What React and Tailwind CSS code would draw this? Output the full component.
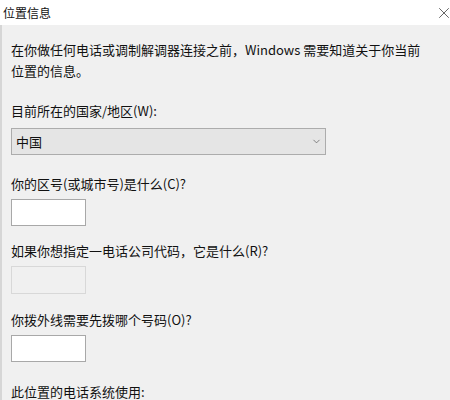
import { ChevronDown, X } from 'lucide-react';

const font = { fontFamily: '"Microsoft YaHei", "Noto Sans CJK SC", "Noto Sans", sans-serif' };

function Label({ children, className = '' }) {
  return <div className={`h-[21px] leading-[21px] text-[13px] text-[#111] ${className}`}>{children}</div>;
}

function TextBox({ disabled = false, className = '' }) {
  return (
    <div
      className={`w-[75px] h-[27px] border ${
        disabled ? 'bg-[#f0f0f0] border-[#d8d8d8]' : 'bg-white border-[#a8a8a8]'
      } ${className}`}
    />
  );
}

export default function App() {
  return (
    <div className="w-[450px] h-[400px] overflow-hidden bg-[#f0f0f0]" style={font}>
      {/* title bar */}
      <div className="h-[25px] bg-white flex items-center justify-between pl-[3px] pr-0">
        <span className="text-[12px] text-[#111]">位置信息</span>
        <X className="w-[18px] h-[18px] text-[#333] mr-[-3px]" strokeWidth={1} />
      </div>

      <div className="border-l-2 border-[#d6d6d6] pl-[9px] h-[375px]">
        <p className="pt-[14px] text-[13px] leading-[21px] text-[#111] w-[420px]">
          在你做任何电话或调制解调器连接之前，Windows 需要知道关于你当前位置的信息。
        </p>

        <Label className="mt-[19px]">目前所在的国家/地区(W):</Label>
        <div className="mt-[7px] w-[315px] h-[27px] bg-[#e5e5e5] border border-[#acacac] flex items-center justify-between pl-[4px] pr-[3px]">
          <span className="text-[13px] text-[#111]">中国</span>
          <ChevronDown className="w-[11px] h-[11px] text-[#555]" strokeWidth={1.5} />
        </div>

        <Label className="mt-[18px]">你的区号(或城市号)是什么(C)?</Label>
        <TextBox className="mt-[5px]" />

        <Label className="mt-[14px]">如果你想指定一电话公司代码，它是什么(R)?</Label>
        <TextBox disabled className="mt-[5px] h-[28px]" />

        <Label className="mt-[15px]">你拨外线需要先拨哪个号码(O)?</Label>
        <TextBox className="mt-[5px]" />

        <Label className="mt-[19px]">此位置的电话系统使用:</Label>
      </div>
    </div>
  );
}
